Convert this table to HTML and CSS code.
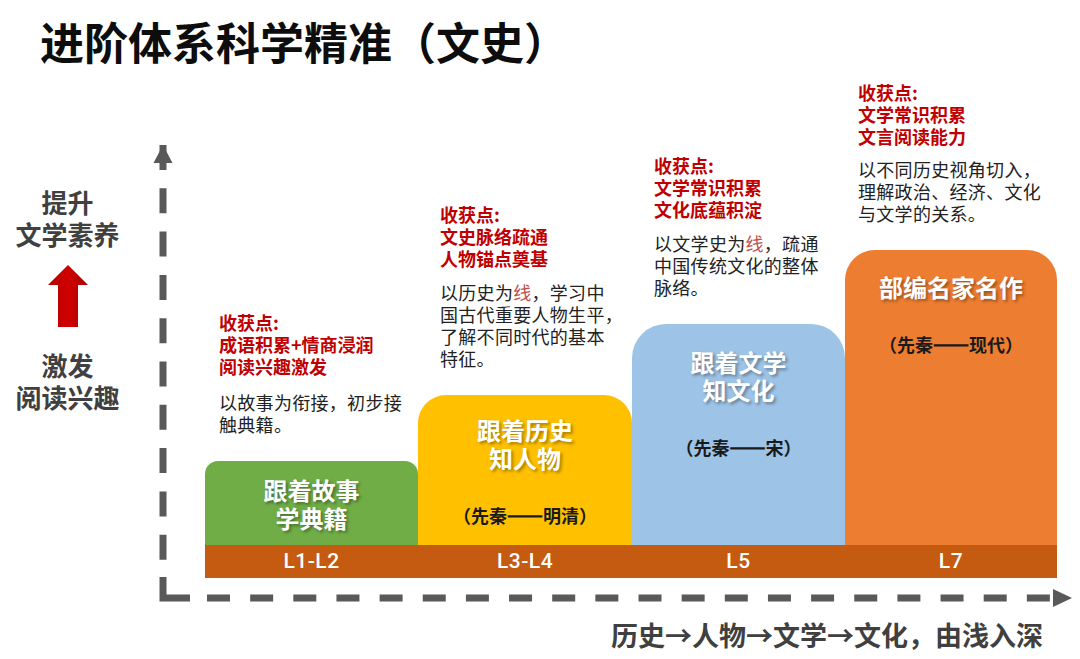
FILE: index.html
```html
<!DOCTYPE html>
<html lang="zh-CN">
<head>
<meta charset="utf-8">
<title>进阶体系科学精准（文史）</title>
<link rel="stylesheet" href="styles.css">
</head>
<body>
<div class="page">
  <h1 class="title">进阶体系科学精准（文史）</h1>

  <div class="main">
    <div class="labels">
      <div class="label">提升<br>文学素养</div>
      <svg class="up-arrow" width="40" height="62" viewBox="0 0 40 62">
        <defs>
          <linearGradient id="ag" x1="0" y1="0" x2="1" y2="0">
            <stop offset="0" stop-color="#b00000"/>
            <stop offset="0.5" stop-color="#d00000"/>
            <stop offset="1" stop-color="#a80000"/>
          </linearGradient>
        </defs>
        <polygon points="20,0 40,20 30,20 30,62 10,62 10,20 0,20" fill="url(#ag)"/>
      </svg>
      <div class="label label-low">激发<br>阅读兴趣</div>
    </div>

    <div class="plot">
      <div class="col col-1">
        <div class="info">
          <div class="gain">收获点:<br>成语积累+情商浸润<br>阅读兴趣激发</div>
          <div class="desc">以故事为衔接，初步接<br>触典籍。</div>
        </div>
        <div class="box box-green">
          <div class="box-title">跟着故事<br>学典籍</div>
        </div>
        <div class="level">L1-L2</div>
      </div>

      <div class="col col-2">
        <div class="info">
          <div class="gain">收获点:<br>文史脉络疏通<br>人物锚点奠基</div>
          <div class="desc">以历史为<span class="hl">线</span>，学习中<br>国古代重要人物生平，<br>了解不同时代的基本<br>特征。</div>
        </div>
        <div class="box box-yellow">
          <div class="box-title">跟着历史<br>知人物</div>
          <div class="period">（先秦<span class="dash">——</span>明清）</div>
        </div>
        <div class="level">L3-L4</div>
      </div>

      <div class="col col-3">
        <div class="info">
          <div class="gain">收获点:<br>文学常识积累<br>文化底蕴积淀</div>
          <div class="desc">以文学史为<span class="hl">线</span>，疏通<br>中国传统文化的整体<br>脉络。</div>
        </div>
        <div class="box box-blue">
          <div class="box-title">跟着文学<br>知文化</div>
          <div class="period">（先秦<span class="dash">——</span>宋）</div>
        </div>
        <div class="level">L5</div>
      </div>

      <div class="col col-4">
        <div class="info">
          <div class="gain">收获点:<br>文学常识积累<br>文言阅读能力</div>
          <div class="desc">以不同历史视角切入，<br>理解政治、经济、文化<br>与文学的关系。</div>
        </div>
        <div class="box box-orange">
          <div class="box-title">部编名家名作</div>
          <div class="period">（先秦<span class="dash">——</span>现代）</div>
        </div>
        <div class="level">L7</div>
      </div>
    </div>
  </div>

  <div class="axis-gap"></div>
  <div class="caption">历史→人物→文学→文化，由浅入深</div>

  <svg class="axes" width="1080" height="659" viewBox="0 0 1080 659">
    <polygon points="163,145 172.5,163 153.5,163" fill="#595959"/>
    <line x1="163" y1="145" x2="163" y2="560" stroke="#595959" stroke-width="7" stroke-dasharray="25 18.3"/>
    <path d="M163,577 V598 H190" fill="none" stroke="#595959" stroke-width="7" stroke-linejoin="miter"/>
    <line x1="207" y1="598" x2="1050" y2="598" stroke="#595959" stroke-width="7" stroke-dasharray="23 20.15"/>
    <polygon points="1053,589 1053,607 1072,598" fill="#595959"/>
  </svg>
</div>
</body>
</html>
```

FILE: styles.css
```css
* {
  box-sizing: border-box;
}

html, body {
  margin: 0;
  padding: 0;
  background: #ffffff;
}

body {
  font-family: "Noto Sans CJK SC", "Noto Sans", sans-serif;
  color: #222222;
}

.page {
  position: relative;
  width: 1080px;
  height: 659px;
  overflow: hidden;
  background: #ffffff;
}

.title {
  margin: 0;
  padding: 15px 0 0 40px;
  height: 67px;
  font-size: 44px;
  line-height: 52px;
  font-weight: 700;
  color: #0d0d0d;
  white-space: nowrap;
}

.main {
  display: flex;
  height: 511px;
}

.labels {
  width: 135px;
  padding-top: 119px;
  display: flex;
  flex-direction: column;
  align-items: center;
}

.label {
  font-size: 26px;
  line-height: 32px;
  font-weight: 700;
  color: #404040;
  text-align: center;
  white-space: nowrap;
}

.up-arrow {
  display: block;
  margin-top: 15px;
}

.label-low {
  margin-top: 22px;
}

.plot {
  margin-left: 70px;
  width: 852px;
  height: 511px;
  display: flex;
  align-items: flex-end;
}

.col {
  display: flex;
  flex-direction: column;
}

.col-1 { width: 213px; }
.col-2 { width: 214px; }
.col-3 { width: 213px; }
.col-4 { width: 212px; }

.info {
  white-space: nowrap;
  padding-bottom: 26px;
}

.col-1 .info { padding-left: 14px; }
.col-2 .info { padding-left: 22px; }
.col-3 .info { padding-left: 22px; }
.col-4 .info { padding-left: 13px; }

.gain {
  font-size: 18px;
  line-height: 22px;
  font-weight: 700;
  color: #c00000;
}

.desc {
  margin-top: 12px;
  font-size: 18px;
  line-height: 22px;
  letter-spacing: 0.3px;
  color: #222222;
}

.col-1 .desc { margin-top: 14px; }
.col-4 .desc { margin-top: 11px; }

.hl {
  color: #c0504d;
}

.box {
  text-align: center;
}

.box-green {
  height: 84px;
  background: #70ad47;
  border-radius: 13px 13px 0 0;
  padding-top: 15px;
}

.box-yellow {
  height: 150px;
  background: #ffc000;
  border-radius: 28px 28px 0 0;
  padding-top: 21px;
}

.box-blue {
  height: 221px;
  background: #9dc3e6;
  border-radius: 34px 34px 0 0;
  padding-top: 24px;
}

.box-orange {
  height: 295px;
  background: #ed7d31;
  border-radius: 30px 30px 0 0;
  padding-top: 23px;
}

.box-title {
  font-size: 24px;
  line-height: 28px;
  font-weight: 700;
  color: #ffffff;
  text-shadow: 2px 2px 3px rgba(0, 0, 0, 0.35);
  white-space: nowrap;
}

.period {
  margin-top: 32px;
  font-size: 18px;
  line-height: 22px;
  font-weight: 700;
  color: #1a1a1a;
  white-space: nowrap;
}

.dash {
  -webkit-text-stroke: 1.3px #1a1a1a;
  letter-spacing: 2px;
  margin-right: -2px;
}

.level {
  height: 33px;
  background: #c55a11;
  color: #ffffff;
  font-family: Roboto, "Noto Sans", sans-serif;
  font-weight: 500;
  font-size: 21px;
  line-height: 33px;
  letter-spacing: 0.5px;
  text-align: center;
}

.axis-gap {
  height: 40px;
}

.caption {
  padding-right: 37px;
  text-align: right;
  font-size: 27px;
  line-height: 34px;
  font-weight: 700;
  color: #404040;
  white-space: nowrap;
}

.axes {
  position: absolute;
  left: 0;
  top: 0;
  pointer-events: none;
}
```
